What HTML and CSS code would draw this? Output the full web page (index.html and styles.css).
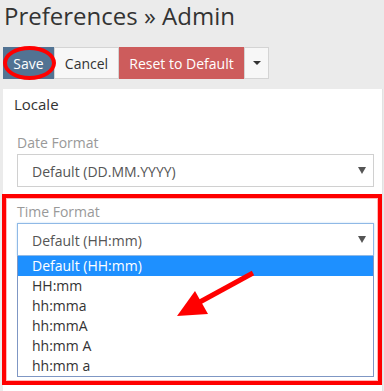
FILE: index.html
```html
<!DOCTYPE html>
<html>
<head>
<meta charset="utf-8">
<link rel="stylesheet" href="styles.css">
</head>
<body>
<div class="page">
  <h1 class="title">Preferences » Admin</h1>
  <div class="btn-group">
    <button class="btn btn-save">Save</button>
    <button class="btn btn-cancel">Cancel</button>
    <button class="btn btn-reset">Reset to Default</button>
    <button class="btn btn-caret"><span class="caret"></span></button>
  </div>
  <section class="panel">
    <div class="panel-heading">Locale</div>
    <div class="field">
      <div class="field-label">Date Format</div>
      <div class="select"><span class="select-value">Default (DD.MM.YYYY)</span><span class="arrow"></span></div>
    </div>
    <div class="field field-time">
      <div class="field-label">Time Format</div>
      <div class="select select-focus"><span class="select-value">Default (HH:mm)</span><span class="arrow"></span></div>
      <ul class="options">
        <li class="option option-active">Default (HH:mm)</li>
        <li class="option">HH:mm</li>
        <li class="option">hh:mma</li>
        <li class="option">hh:mmA</li>
        <li class="option">hh:mm A</li>
        <li class="option">hh:mm a</li>
      </ul>
    </div>
  </section>
  <div class="annot-rect"></div>
  <div class="annot-ellipse"></div>
  <svg class="annot-arrow" width="384" height="391" viewBox="0 0 384 391">
    <line x1="253" y1="273" x2="198" y2="303" stroke="#ff0000" stroke-width="5"/>
    <polygon points="177,316 195,291 208,314" fill="#ff0000"/>
  </svg>
</div>
</body>
</html>
```

FILE: styles.css
```css
* { box-sizing: border-box; }
html, body {
  margin: 0;
  padding: 0;
  background: #ebebeb;
  font-family: "Open Sans", "Noto Sans", sans-serif;
  color: #333;
}
.page {
  position: relative;
  width: 384px;
  height: 391px;
  overflow: hidden;
  padding-left: 3px;
}
.title {
  margin: 0 0 15px 1px;
  font-size: 24px;
  line-height: 32px;
  font-weight: 400;
  color: #333;
  white-space: nowrap;
}
.btn-group {
  display: flex;
  height: 32px;
}
.btn {
  font-family: inherit;
  font-size: 14px;
  height: 32px;
  padding: 0;
  margin: 0;
  border: 1px solid transparent;
  border-radius: 0;
  display: flex;
  align-items: center;
  justify-content: center;
  white-space: nowrap;
}
.btn-save {
  background: #527393;
  border-color: #527393;
  color: #fff;
  width: 51px;
}
.btn-cancel {
  background: #f7f7f7;
  border-color: #d4d4d4;
  color: #333;
  width: 65px;
}
.btn-reset {
  background: #cd5c5c;
  border-color: #cd5c5c;
  color: #fff;
  width: 125px;
}
.btn-caret {
  background: #f7f7f7;
  border-color: #d4d4d4;
  width: 25px;
}
.caret {
  width: 0;
  height: 0;
  border-left: 4px solid transparent;
  border-right: 4px solid transparent;
  border-top: 4px solid #333;
}
.panel {
  margin-top: 10px;
  width: 380px;
  background: #fff;
  border-right: 1px solid #e2e2e2;
  padding: 5px 8px 20px 11px;
  height: 310px;
}
.panel-heading {
  font-size: 15px;
  line-height: 20px;
  color: #333;
}
.field {
  margin-top: 19px;
  padding-left: 3px;
}
.field-time {
  margin-top: 15px;
}
.field-label {
  font-size: 14px;
  line-height: 20px;
  color: #999;
  margin-bottom: 1px;
}
.select {
  height: 33px;
  width: 357px;
  border: 1px solid #d0d0d0;
  display: flex;
  align-items: center;
  justify-content: space-between;
  padding: 2px 7px 0 14px;
  font-size: 14px;
  color: #555;
}
.select-focus {
  border-color: #8fb9e6;
  box-shadow: 0 0 2px rgba(102, 175, 233, 0.4);
}
.arrow {
  width: 0;
  height: 0;
  border-left: 4px solid transparent;
  border-right: 4px solid transparent;
  border-top: 7px solid #555;
  margin-top: -2px;
}
.options {
  list-style: none;
  margin: 0;
  padding: 0;
  width: 357px;
  border: 1px solid #7f97c4;
  border-top: none;
}
.option {
  height: 20px;
  line-height: 20px;
  font-size: 14px;
  padding-left: 14px;
  color: #333;
}
.option-active {
  background: #1e90ff;
  color: #fff;
}
.annot-rect {
  position: absolute;
  left: 2px;
  top: 194px;
  width: 380px;
  height: 191px;
  border: 4px solid #ff0000;
  box-shadow: inset 0 0 0 1px #ffb8b8;
}
.annot-ellipse {
  position: absolute;
  left: 3px;
  top: 46px;
  width: 53px;
  height: 34px;
  border: 4px solid #ff0000;
  border-radius: 50%;
}
.annot-arrow {
  position: absolute;
  left: 0;
  top: 0;
  pointer-events: none;
}
```
